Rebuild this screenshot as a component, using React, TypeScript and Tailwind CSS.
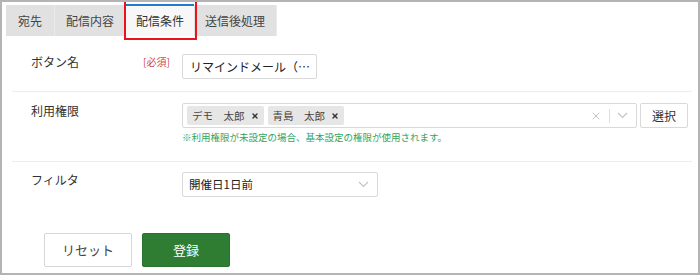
import { X } from 'lucide-react';

const TABS = [
  { label: '宛先', w: 'w-[49px]' },
  { label: '配信内容', w: 'w-[71px]' },
  { label: '配信条件', w: 'w-[68px]', active: true },
  { label: '送信後処理', w: 'w-[83px]' },
];

function Chevron() {
  return (
    <svg width="11" height="7" viewBox="0 0 11 7" fill="none" stroke="#c4c4c4" strokeWidth="1.2">
      <path d="M1 1l4.5 4.5L10 1" />
    </svg>
  );
}

function Tag({ name }: { name: string }) {
  return (
    <span className="flex items-center h-[19px] px-[5px] gap-[6px] bg-[#e6e6e6] rounded-[2px] text-[10.5px] text-[#444] whitespace-nowrap">
      {name}
      <X className="w-[8px] h-[8px] text-[#333]" strokeWidth={4} />
    </span>
  );
}

export default function App() {
  return (
    <div
      className="relative w-[700px] h-[275px] bg-white border-2 border-[#b4b4b4] text-[#333] overflow-hidden"
      style={{ fontFamily: '"Noto Sans CJK JP", "Liberation Sans", sans-serif' }}
    >
      {/* tabs */}
      <div className="pl-1 pt-[3px]">
        <div className="flex h-[31px] w-[271px] bg-[#e1e1e1]">
          {TABS.map(t =>
            t.active ? (
              <div key={t.label} className={`${t.w} -mt-px flex items-center justify-center bg-[#f7f7f7] border-t-2 border-[#1e7bd0] text-[12px] text-[#333]`}>
                {t.label}
              </div>
            ) : (
              <div key={t.label} className={`${t.w} flex items-center justify-center border-r border-[#ebebeb] text-[12px] text-[#444]`}>
                {t.label}
              </div>
            )
          )}
        </div>
      </div>

      {/* annotation box */}
      <div className="absolute left-[122px] top-[-2px] w-[73px] h-[40px] border-2 border-[#e8141c]" />

      <div className="ml-[10px] mr-[6px]">
        {/* ボタン名 */}
        <div className="flex items-start pl-[19px] pt-[18px] pb-[12px] border-b border-[#ececec]">
          <div className="w-[112px] leading-4 text-[12px]">ボタン名</div>
          <div className="w-[39px] leading-4 text-[10px] text-[#d04848]">[必須]</div>
          <div className="w-[135px] h-[25px] flex items-center px-[7px] border border-[#d9d9d9] rounded-[2px] text-[12px] text-[#222] whitespace-nowrap overflow-hidden">
            リマインドメール（…
          </div>
        </div>

        {/* 利用権限 */}
        <div className="flex items-start pl-[19px] pt-[11px] pb-[17px] border-b border-[#ececec]">
          <div className="w-[112px] leading-4 text-[12px]">利用権限</div>
          <div className="w-[39px]" />
          <div>
            <div className="flex gap-[3px]">
              <div className="w-[455px] h-[25px] flex items-center border border-[#d9d9d9] rounded-[2px] pl-[4px] pr-[8px]">
                <div className="flex gap-[4px] flex-1">
                  <Tag name="デモ　太郎" />
                  <Tag name="青島　太郎" />
                </div>
                <X className="w-[12px] h-[12px] text-[#c4c4c4]" strokeWidth={2} />
                <span className="mx-[7px] h-[14px] w-px bg-[#dcdcdc]" />
                <Chevron />
              </div>
              <button className="w-[48px] h-[25px] border border-[#d9d9d9] rounded-[2px] bg-white text-[12px] text-[#333]">
                選択
              </button>
            </div>
            <p className="mt-[2px] leading-[14px] text-[9.5px] text-[#33a35f] whitespace-nowrap">
              ※利用権限が未設定の場合、基本設定の権限が使用されます。
            </p>
          </div>
        </div>

        {/* フィルタ */}
        <div className="flex items-start pl-[19px] pt-[10px]">
          <div className="w-[112px] leading-4 text-[12px]">フィルタ</div>
          <div className="w-[39px]" />
          <div className="w-[196px] h-[25px] flex items-center justify-between pl-[6px] pr-[8px] border border-[#d9d9d9] rounded-[2px] text-[11.5px] text-[#222]">
            開催日1日前
            <Chevron />
          </div>
        </div>

        {/* buttons */}
        <div className="flex gap-[10px] pl-[32px] mt-[36px]">
          <button className="w-[88px] h-[34px] border border-[#d6d6d6] rounded-[2px] bg-white text-[13px] text-[#444]">
            リセット
          </button>
          <button className="w-[88px] h-[34px] rounded-[2px] bg-[#2e7d32] border border-[#2a702e] text-[13px] text-white">
            登録
          </button>
        </div>
      </div>
    </div>
  );
}
